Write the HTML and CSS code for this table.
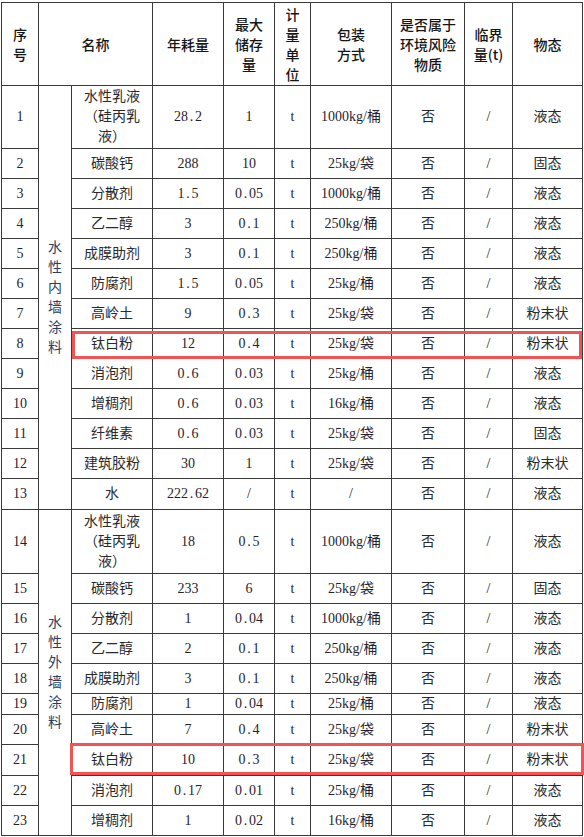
FILE: index.html
```html
<!DOCTYPE html>
<html lang="zh">
<head>
<meta charset="utf-8">
<title>原辅材料一览表</title>
<link rel="stylesheet" href="styles.css">
</head>
<body>
<div class="sheet">
  <div class="c h">序<br>号</div>
  <div class="c h span2">名称</div>
  <div class="c h">年耗量</div>
  <div class="c h">最大<br>储存<br>量</div>
  <div class="c h">计<br>量<br>单<br>位</div>
  <div class="c h">包装<br>方式</div>
  <div class="c h">是否属于<br>环境风险<br>物质</div>
  <div class="c h">临界<br>量(t)</div>
  <div class="c h">物态</div>

  <div class="c n">1</div>
  <div class="c grp g1"><span class="vt">水性内墙涂料</span></div>
  <div class="c">水性乳液<br>（硅丙乳<br>液）</div>
  <div class="c n">28<span class="pt">.</span>2</div><div class="c n">1</div><div class="c n">t</div><div class="c n">1000kg/桶</div><div class="c">否</div><div class="c n">/</div><div class="c">液态</div>

  <div class="c n">2</div><div class="c">碳酸钙</div><div class="c n">288</div><div class="c n">10</div><div class="c n">t</div><div class="c n">25kg/袋</div><div class="c">否</div><div class="c n">/</div><div class="c">固态</div>
  <div class="c n">3</div><div class="c">分散剂</div><div class="c n">1<span class="pt">.</span>5</div><div class="c n">0<span class="pt">.</span>05</div><div class="c n">t</div><div class="c n">1000kg/桶</div><div class="c">否</div><div class="c n">/</div><div class="c">液态</div>
  <div class="c n">4</div><div class="c">乙二醇</div><div class="c n">3</div><div class="c n">0<span class="pt">.</span>1</div><div class="c n">t</div><div class="c n">250kg/桶</div><div class="c">否</div><div class="c n">/</div><div class="c">液态</div>
  <div class="c n">5</div><div class="c">成膜助剂</div><div class="c n">3</div><div class="c n">0<span class="pt">.</span>1</div><div class="c n">t</div><div class="c n">250kg/桶</div><div class="c">否</div><div class="c n">/</div><div class="c">液态</div>
  <div class="c n">6</div><div class="c">防腐剂</div><div class="c n">1<span class="pt">.</span>5</div><div class="c n">0<span class="pt">.</span>05</div><div class="c n">t</div><div class="c n">25kg/桶</div><div class="c">否</div><div class="c n">/</div><div class="c">液态</div>
  <div class="c n">7</div><div class="c">高岭土</div><div class="c n">9</div><div class="c n">0<span class="pt">.</span>3</div><div class="c n">t</div><div class="c n">25kg/袋</div><div class="c">否</div><div class="c n">/</div><div class="c">粉末状</div>
  <div class="c n">8</div><div class="c hl hl1">钛白粉</div><div class="c n">12</div><div class="c n">0<span class="pt">.</span>4</div><div class="c n">t</div><div class="c n">25kg/袋</div><div class="c">否</div><div class="c n">/</div><div class="c">粉末状</div>
  <div class="c n">9</div><div class="c">消泡剂</div><div class="c n">0<span class="pt">.</span>6</div><div class="c n">0<span class="pt">.</span>03</div><div class="c n">t</div><div class="c n">25kg/桶</div><div class="c">否</div><div class="c n">/</div><div class="c">液态</div>
  <div class="c n">10</div><div class="c">增稠剂</div><div class="c n">0<span class="pt">.</span>6</div><div class="c n">0<span class="pt">.</span>03</div><div class="c n">t</div><div class="c n">16kg/桶</div><div class="c">否</div><div class="c n">/</div><div class="c">液态</div>
  <div class="c n">11</div><div class="c">纤维素</div><div class="c n">0<span class="pt">.</span>6</div><div class="c n">0<span class="pt">.</span>03</div><div class="c n">t</div><div class="c n">25kg/袋</div><div class="c">否</div><div class="c n">/</div><div class="c">固态</div>
  <div class="c n">12</div><div class="c">建筑胶粉</div><div class="c n">30</div><div class="c n">1</div><div class="c n">t</div><div class="c n">25kg/袋</div><div class="c">否</div><div class="c n">/</div><div class="c">粉末状</div>
  <div class="c n">13</div><div class="c">水</div><div class="c n">222<span class="pt">.</span>62</div><div class="c n">/</div><div class="c n">t</div><div class="c n">/</div><div class="c">否</div><div class="c n">/</div><div class="c">液态</div>

  <div class="c n">14</div>
  <div class="c grp g2"><span class="vt">水性外墙涂料</span></div>
  <div class="c">水性乳液<br>（硅丙乳<br>液）</div>
  <div class="c n">18</div><div class="c n">0<span class="pt">.</span>5</div><div class="c n">t</div><div class="c n">1000kg/桶</div><div class="c">否</div><div class="c n">/</div><div class="c">液态</div>

  <div class="c n">15</div><div class="c">碳酸钙</div><div class="c n">233</div><div class="c n">6</div><div class="c n">t</div><div class="c n">25kg/袋</div><div class="c">否</div><div class="c n">/</div><div class="c">固态</div>
  <div class="c n">16</div><div class="c">分散剂</div><div class="c n">1</div><div class="c n">0<span class="pt">.</span>04</div><div class="c n">t</div><div class="c n">1000kg/桶</div><div class="c">否</div><div class="c n">/</div><div class="c">液态</div>
  <div class="c n">17</div><div class="c">乙二醇</div><div class="c n">2</div><div class="c n">0<span class="pt">.</span>1</div><div class="c n">t</div><div class="c n">250kg/桶</div><div class="c">否</div><div class="c n">/</div><div class="c">液态</div>
  <div class="c n">18</div><div class="c">成膜助剂</div><div class="c n">3</div><div class="c n">0<span class="pt">.</span>1</div><div class="c n">t</div><div class="c n">250kg/桶</div><div class="c">否</div><div class="c n">/</div><div class="c">液态</div>
  <div class="c n">19</div><div class="c">防腐剂</div><div class="c n">1</div><div class="c n">0<span class="pt">.</span>04</div><div class="c n">t</div><div class="c n">25kg/桶</div><div class="c">否</div><div class="c n">/</div><div class="c">液态</div>
  <div class="c n">20</div><div class="c">高岭土</div><div class="c n">7</div><div class="c n">0<span class="pt">.</span>4</div><div class="c n">t</div><div class="c n">25kg/袋</div><div class="c">否</div><div class="c n">/</div><div class="c">粉末状</div>
  <div class="c n">21</div><div class="c hl hl2">钛白粉</div><div class="c n">10</div><div class="c n">0<span class="pt">.</span>3</div><div class="c n">t</div><div class="c n">25kg/袋</div><div class="c">否</div><div class="c n">/</div><div class="c">粉末状</div>
  <div class="c n">22</div><div class="c">消泡剂</div><div class="c n">0<span class="pt">.</span>17</div><div class="c n">0<span class="pt">.</span>01</div><div class="c n">t</div><div class="c n">25kg/桶</div><div class="c">否</div><div class="c n">/</div><div class="c">液态</div>
  <div class="c n">23</div><div class="c">增稠剂</div><div class="c n">1</div><div class="c n">0<span class="pt">.</span>02</div><div class="c n">t</div><div class="c n">16kg/桶</div><div class="c">否</div><div class="c n">/</div><div class="c">液态</div>
</div>
</body>
</html>
```

FILE: styles.css
```css
html, body {
  margin: 0;
  padding: 0;
  background: #ffffff;
}

.sheet {
  display: grid;
  grid-template-columns: 36px 32px 80px 70px 50px 35px 80px 72px 47px 69px;
  grid-template-rows: 82px 62px repeat(11, 29px) 30px 63px repeat(4, 29px) 20px 29px 30px 29px 29px;
  gap: 1px;
  padding: 1px;
  width: max-content;
  margin: 2px 0 0 1px;
  background: #3a3a3a;
  font-family: "Liberation Serif", "Noto Sans CJK SC", serif;
  font-size: 14px;
  line-height: 20px;
  color: #2a2a2a;
}

.c {
  background: #ffffff;
  display: flex;
  align-items: center;
  justify-content: center;
  text-align: center;
  white-space: nowrap;
}

.h {
  font-family: "Noto Sans CJK SC", sans-serif;
  font-weight: 500;
  color: #151515;
}

.span2 {
  grid-column: span 2;
}

.n {
  color: #1f2430;
}

.pt {
  display: inline-block;
  width: 7px;
  text-align: center;
}

.grp {
  color: #2b3d66;
  white-space: normal;
}

.g1 {
  grid-column: 2;
  grid-row: 2 / span 13;
}

.g2 {
  grid-column: 2;
  grid-row: 15 / span 10;
}

.vt {
  display: block;
  width: 1em;
  line-height: 20px;
  word-break: break-all;
}

/* red highlight frame drawn over a whole row, from the name column rightwards */
.hl {
  position: relative;
}

.hl::after {
  content: "";
  position: absolute;
  border: 3px solid #f25353;
  box-sizing: border-box;
  pointer-events: none;
}

.hl1::after {
  left: 0;
  top: 2px;
  width: 510px;
  height: 28px;
}

.hl2::after {
  left: -2px;
  top: -2px;
  width: 514px;
  height: 32px;
}
```
